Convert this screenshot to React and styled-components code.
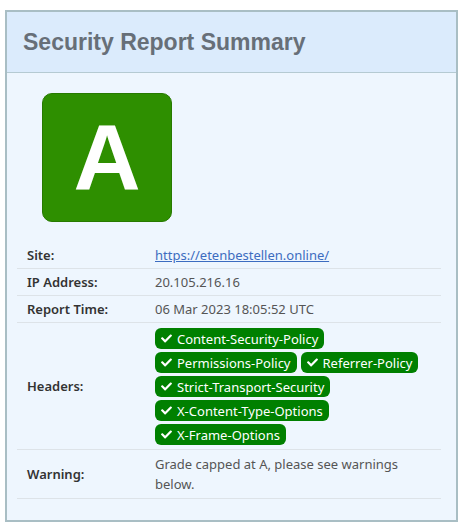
import React from "react";
import styled, { createGlobalStyle } from "styled-components";
import { FaCheck } from "react-icons/fa";

const GlobalStyle = createGlobalStyle`
  html, body {
    margin: 0;
    padding: 0;
    background: #fff;
  }
  body {
    font-family: "Noto Sans", "Open Sans", sans-serif;
  }
`;

const Page = styled.div`
  padding: 10px 6px 0 5px;
`;

const Card = styled.section`
  width: 453px;
  box-sizing: border-box;
  border: 2px solid #a9bec4;
  background: #eef6fe;
`;

const CardHeader = styled.header`
  height: 61px;
  box-sizing: border-box;
  display: flex;
  align-items: center;
  padding: 0 16px;
  background: #dbebfc;
  border-bottom: 1px solid #b5cad2;
`;

const Title = styled.h2`
  margin: 0;
  font-family: "Liberation Sans", Arial, sans-serif;
  font-weight: bold;
  font-size: 23px;
  color: #676f78;
`;

const CardBody = styled.div`
  padding: 20px 15px 21px 10px;
`;

const GradeBox = styled.div`
  width: 130px;
  height: 129px;
  margin-left: 25px;
  box-sizing: border-box;
  border: 1px solid #277a00;
  border-radius: 10px;
  background: #2e8f00;
  display: flex;
  align-items: center;
  justify-content: center;
  color: #fff;
  font-family: "Liberation Sans", Arial, sans-serif;
  font-weight: bold;
  font-size: 93px;
  line-height: 1;
`;

const Table = styled.table`
  width: 100%;
  margin-top: 20px;
  border-collapse: collapse;
  font-size: 13px;
`;

const Row = styled.tr`
  border-bottom: 1px solid #dde3e8;
`;

const Label = styled.th`
  width: 128px;
  padding: 4px 0 4px 10px;
  text-align: left;
  font-weight: 600;
  color: #333;
  line-height: 18px;
  vertical-align: middle;
`;

const Value = styled.td`
  padding: ${(p) => (p.$tight ? "5px 12px 4px 0" : "4px 12px 4px 0")};
  color: #555;
  line-height: ${(p) => (p.$tall ? "20px" : "18px")};
`;

const SiteLink = styled.a`
  color: #3c6cc0;
  text-decoration: underline;
`;

const Pills = styled.div`
  display: flex;
  flex-wrap: wrap;
  gap: 3px 4px;
  width: 270px;
`;

const Pill = styled.span`
  display: inline-flex;
  align-items: center;
  gap: 5px;
  height: 21px;
  padding: 0 6px;
  border-radius: 6px;
  background: #008000;
  color: #fff;
  font-size: 13px;
  white-space: nowrap;

  svg {
    width: 11px;
    height: 11px;
  }
`;

const headers = [
  "Content-Security-Policy",
  "Permissions-Policy",
  "Referrer-Policy",
  "Strict-Transport-Security",
  "X-Content-Type-Options",
  "X-Frame-Options",
];

export default function App() {
  return (
    <>
      <GlobalStyle />
      <Page>
        <Card>
          <CardHeader>
            <Title>Security Report Summary</Title>
          </CardHeader>
          <CardBody>
            <GradeBox>A</GradeBox>
            <Table>
              <tbody>
                <Row>
                  <Label>Site:</Label>
                  <Value>
                    <SiteLink href="#">https://etenbestellen.online/</SiteLink>
                  </Value>
                </Row>
                <Row>
                  <Label>IP Address:</Label>
                  <Value>20.105.216.16</Value>
                </Row>
                <Row>
                  <Label>Report Time:</Label>
                  <Value>06 Mar 2023 18:05:52 UTC</Value>
                </Row>
                <Row>
                  <Label>Headers:</Label>
                  <Value $tight>
                    <Pills>
                      {headers.map((h) => (
                        <Pill key={h}>
                          <FaCheck />
                          {h}
                        </Pill>
                      ))}
                    </Pills>
                  </Value>
                </Row>
                <Row>
                  <Label>Warning:</Label>
                  <Value $tall>
                    Grade capped at A, please see warnings below.
                  </Value>
                </Row>
              </tbody>
            </Table>
          </CardBody>
        </Card>
      </Page>
    </>
  );
}
